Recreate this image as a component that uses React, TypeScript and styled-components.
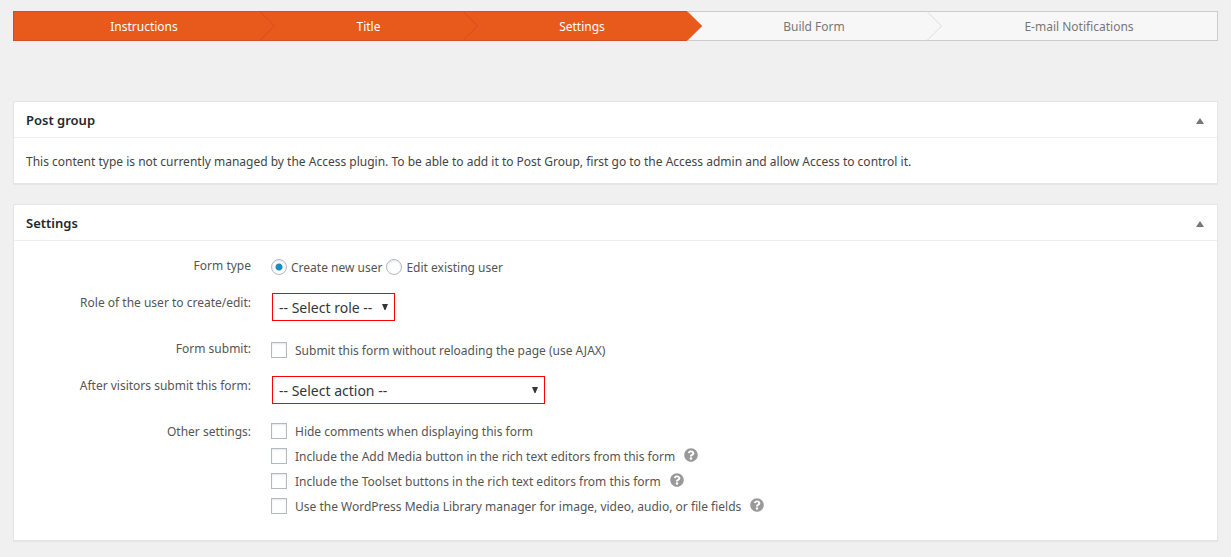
import React, { useState } from "react";
import styled, { createGlobalStyle } from "styled-components";
import { FaQuestionCircle } from "react-icons/fa";

const GlobalStyle = createGlobalStyle`
  *, *::before, *::after { box-sizing: border-box; }
  body {
    margin: 0;
    background: #f0f0f0;
    color: #444;
    font: 12px/22px "Noto Sans", sans-serif;
  }
`;

const Page = styled.main`
  padding: 11px 13px 16px;
`;

const Steps = styled.ol`
  display: grid;
  grid-template-columns: 247fr 203fr 224fr 240fr 291fr;
  list-style: none;
  margin: 0 0 60px;
  padding: 0;
`;

const Step = styled.li<{ $done: boolean }>`
  position: relative;
  height: 30px;
  padding: 4px 0 0 14px;
  text-align: center;
  border: 1px solid ${(p) => (p.$done ? "#d54e21" : "#ccc")};
  border-left-width: 0;
  border-right-width: 0;
  background: ${(p) => (p.$done ? "#e8591c" : "#f7f7f7")};
  color: ${(p) => (p.$done ? "#fff" : "#777")};

  &:first-child { border-left-width: 1px; }
  &:last-child { border-right-width: 1px; }
`;

const Chevron = styled.svg`
  position: absolute;
  top: -1px;
  left: 100%;
  z-index: 1;
`;

const Panel = styled.section`
  margin-bottom: 20px;
  background: #fff;
  border: 1px solid #e5e5e5;
  box-shadow: 0 1px 1px rgba(0, 0, 0, 0.04);
`;

const PanelHeader = styled.header`
  display: flex;
  align-items: center;
  justify-content: space-between;
  height: 36px;
  padding: 0 12px;
  border-bottom: 1px solid #eee;
`;

const PanelTitle = styled.h2`
  margin: 0;
  font-size: 13px;
  font-weight: 600;
  color: #23282d;
`;

const Toggle = styled.button`
  display: flex;
  align-items: center;
  padding: 8px 1px 6px;
  border: 0;
  background: none;
  color: #72777c;
`;

const Message = styled.p`
  margin: 0;
  padding: 13px 12px 10px;
`;

const Form = styled.form`
  display: grid;
  gap: 13px;
  padding: 14px 12px 22px;
  color: #555;
`;

const Row = styled.div`
  display: grid;
  grid-template-columns: 225px 1fr;
  column-gap: 20px;
  align-items: start;
`;

const RowLabel = styled.label`
  text-align: right;
`;

const Inline = styled.div`
  display: flex;
  gap: 4px;
  padding-top: 2px;
`;

const Stack = styled.div`
  display: grid;
  gap: 3px;
`;

const OptionRow = styled.div`
  display: flex;
  align-items: flex-start;
  gap: 9px;
`;

const Option = styled.label<{ $gap: number }>`
  display: flex;
  align-items: flex-start;
  gap: ${(p) => p.$gap}px;
`;

const Check = styled.input`
  appearance: none;
  flex: none;
  width: 16px;
  height: 16px;
  margin: 2px 0 0;
  border: 1px solid #b4b9be;
  background: #fff;
  box-shadow: inset 0 1px 2px rgba(0, 0, 0, 0.1);

  &[type="radio"] { border-radius: 50%; }
  &[type="radio"]:checked {
    background: radial-gradient(circle, #1e8cbe 0 3px, transparent 4px) #fff;
  }
  &[type="checkbox"]:checked {
    background: #1e8cbe;
    box-shadow: inset 0 0 0 3px #fff;
  }
`;

const SelectWrap = styled.div<{ $width: number }>`
  position: relative;
  width: ${(p) => p.$width}px;
  margin: 1px 1px 4px;
`;

const Select = styled.select`
  appearance: none;
  display: block;
  width: 100%;
  height: 28px;
  padding: 2px 20px 0 6px;
  border: 1px solid #f00;
  border-radius: 0;
  background: #fff;
  color: #32373c;
  font: inherit;
  font-size: 14px;
`;

const SelectArrow = styled.svg`
  position: absolute;
  top: 11px;
  right: 7px;
  pointer-events: none;
`;

const Help = styled.button`
  display: flex;
  margin-top: 2px;
  padding: 0;
  border: 0;
  background: none;
  color: #999;
  font-size: 14px;
`;

const steps = [
  { name: "Instructions", done: true },
  { name: "Title", done: true },
  { name: "Settings", done: true },
  { name: "Build Form", done: false },
  { name: "E-mail Notifications", done: false },
];

const otherSettings = [
  { text: "Hide comments when displaying this form", help: false },
  { text: "Include the Add Media button in the rich text editors from this form", help: true },
  { text: "Include the Toolset buttons in the rich text editors from this form", help: true },
  { text: "Use the WordPress Media Library manager for image, video, audio, or file fields", help: true },
];

function StepArrow({ done, last }: { done: boolean; last: boolean }) {
  const stroke = !done ? "#ddd" : last ? "#e8591c" : "#d94a1e";
  return (
    <Chevron width="16" height="30" viewBox="0 0 16 30" aria-hidden="true">
      <path d="M0 0.5L15 15L0 29.5Z" fill={done ? "#e8591c" : "#f7f7f7"} />
      <path d="M0 0.5L14.5 15L0 29.5" fill="none" stroke={stroke} />
    </Chevron>
  );
}

function Box({ title, children }: { title: string; children: React.ReactNode }) {
  const [open, setOpen] = useState(true);
  return (
    <Panel>
      <PanelHeader>
        <PanelTitle>{title}</PanelTitle>
        <Toggle type="button" aria-label={`Toggle ${title}`} aria-expanded={open} onClick={() => setOpen(!open)}>
          <svg width="8" height="6" viewBox="0 0 8 6">
            <path d={open ? "M0 6L4 0L8 6Z" : "M0 0L4 6L8 0Z"} fill="currentColor" />
          </svg>
        </Toggle>
      </PanelHeader>
      {open && children}
    </Panel>
  );
}

function Dropdown({ id, width, text }: { id: string; width: number; text: string }) {
  return (
    <SelectWrap $width={width}>
      <Select id={id}>
        <option>{text}</option>
      </Select>
      <SelectArrow width="6" height="6" viewBox="0 0 6 6" aria-hidden="true">
        <path d="M0 0H6L3.5 6H2.5Z" fill="#32373c" />
      </SelectArrow>
    </SelectWrap>
  );
}

export default function App() {
  return (
    <>
      <GlobalStyle />
      <Page>
        <Steps>
          {steps.map((step, i) => (
            <Step key={step.name} $done={step.done}>
              {step.name}
              {i < steps.length - 1 && <StepArrow done={step.done} last={!steps[i + 1].done} />}
            </Step>
          ))}
        </Steps>

        <Box title="Post group">
          <Message>
            This content type is not currently managed by the Access plugin. To be able to add it to Post Group, first
            go to the Access admin and allow Access to control it.
          </Message>
        </Box>

        <Box title="Settings">
          <Form>
            <Row role="radiogroup" aria-labelledby="form-type">
              <RowLabel as="span" id="form-type">Form type</RowLabel>
              <Inline>
                <Option $gap={4}>
                  <Check type="radio" name="type" defaultChecked />
                  Create new user
                </Option>
                <Option $gap={4}>
                  <Check type="radio" name="type" />
                  Edit existing user
                </Option>
              </Inline>
            </Row>
            <Row>
              <RowLabel htmlFor="role">Role of the user to create/edit:</RowLabel>
              <Dropdown id="role" width={123} text="-- Select role --" />
            </Row>
            <Row role="group" aria-labelledby="form-submit">
              <RowLabel as="span" id="form-submit">Form submit:</RowLabel>
              <Inline>
                <Option $gap={8}>
                  <Check type="checkbox" />
                  Submit this form without reloading the page (use AJAX)
                </Option>
              </Inline>
            </Row>
            <Row>
              <RowLabel htmlFor="action">After visitors submit this form:</RowLabel>
              <Dropdown id="action" width={273} text="-- Select action --" />
            </Row>
            <Row role="group" aria-labelledby="other">
              <RowLabel as="span" id="other">Other settings:</RowLabel>
              <Stack>
                {otherSettings.map((item) => (
                  <OptionRow key={item.text}>
                    <Option $gap={8}>
                      <Check type="checkbox" />
                      {item.text}
                    </Option>
                    {item.help && (
                      <Help type="button" aria-label="Help">
                        <FaQuestionCircle />
                      </Help>
                    )}
                  </OptionRow>
                ))}
              </Stack>
            </Row>
          </Form>
        </Box>
      </Page>
    </>
  );
}
